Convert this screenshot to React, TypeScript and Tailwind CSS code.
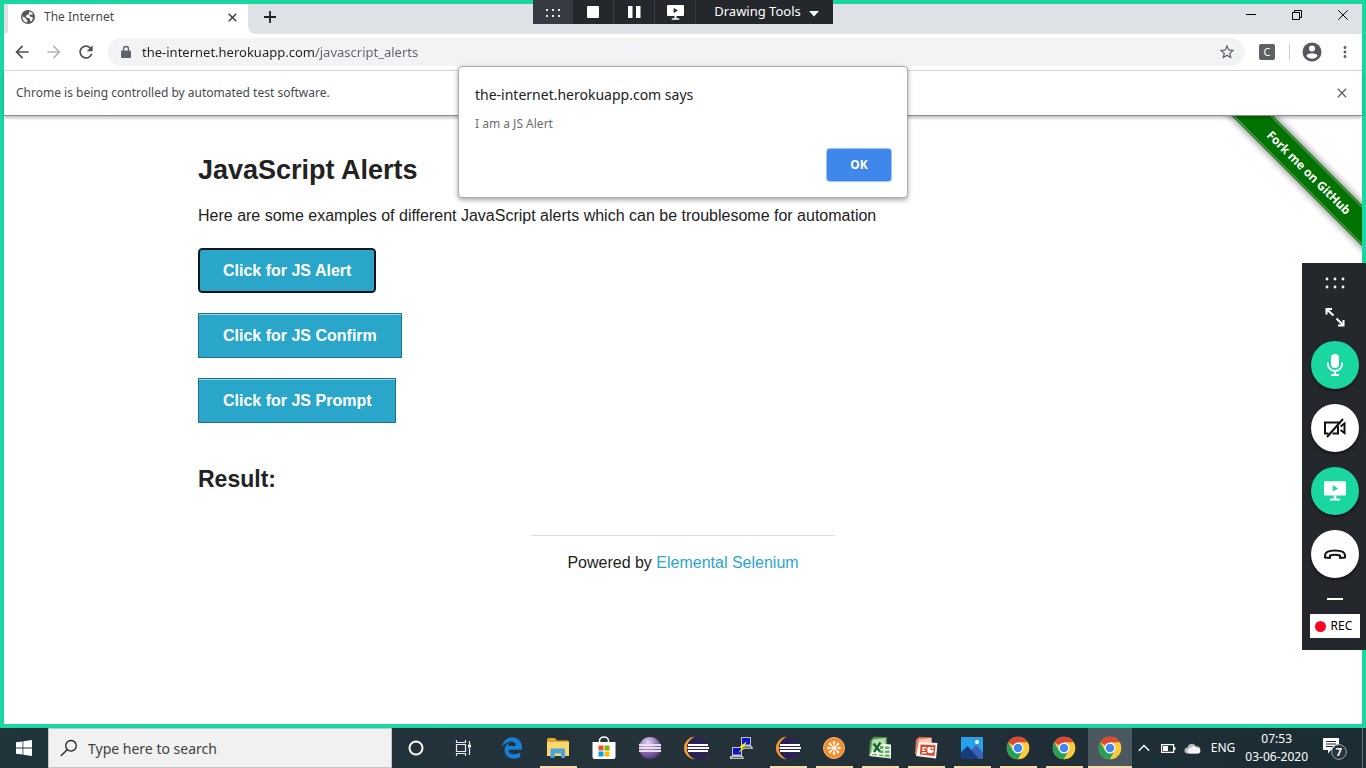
import type { ReactNode } from "react";
import { FaEdgeLegacy } from "react-icons/fa";
import {
  MdArrowBack,
  MdArrowForward,
  MdClose,
  MdLock,
  MdMoreVert,
  MdRefresh,
  MdStarBorder,
} from "react-icons/md";

const UI = "font-['Noto_Sans','Open_Sans',sans-serif]";

function DotsIcon() {
  return (
    <svg width="20" height="12" viewBox="0 0 20 12" fill="#fff">
      {[2, 10, 18].map((x) => (
        <g key={x}>
          <circle cx={x} cy="2" r="1.4" />
          <circle cx={x} cy="10" r="1.4" />
        </g>
      ))}
    </svg>
  );
}

function SmallDotsIcon() {
  return (
    <svg width="16" height="10" viewBox="0 0 16 10" fill="#e8e9ea">
      {[1, 7, 13].map((x) => (
        <g key={x}>
          <rect x={x} y="2" width="2" height="2" />
          <rect x={x} y="8" width="2" height="2" />
        </g>
      ))}
    </svg>
  );
}

function GlobeIcon() {
  return (
    <svg width="14" height="14" viewBox="0 0 14 14">
      <circle cx="7" cy="7" r="7" fill="#55595d" />
      <path d="M8 1.500c1.500 0 3 1 4 2.500l-1 .8-1.500-.3-1.200.8 1 1.500 1.800.1.800 1.300c-.3 1.500-1 2.500-2 3.300l-.8-.8.1-1.700-1.700-1-1.900-.2-.8-1.500 1.200-1.500 1.700-.4.6-1.200z" fill="#fff" />
      <path d="M1.400 6.200l2.500 1.200 1 1.700 1.300.8v2.700C3.500 12.300 1.300 10 1.400 6.200z" fill="#fff" />
    </svg>
  );
}

function ProfileIcon() {
  return (
    <svg width="20" height="20" viewBox="0 0 20 20">
      <circle cx="10" cy="10" r="9.500" fill="#54575b" />
      <circle cx="10" cy="6.500" r="3" fill="#fff" />
      <path d="M4.300 14C5 12 7.500 11.500 10 11.500s5 .5 5.700 2.500A6.800 6.800 0 0 1 10 16.800 6.800 6.800 0 0 1 4.300 14z" fill="#fff" />
    </svg>
  );
}

function ScreenIcon({ play = "#24272c", size = 17 }: { play?: string; size?: number }) {
  return (
    <svg width={size} height={size} viewBox="0 0 17 17">
      <path d="M1 1h15a1 1 0 0 1 1 1v9a1 1 0 0 1-1 1H1a1 1 0 0 1-1-1V2a1 1 0 0 1 1-1z" fill="#fff" />
      <path d="M7.500 12h2v2.200h-2zM5.500 14.200h6q1 0 1 1.600h-8q0-1.600 1-1.600z" fill="#fff" />
      <path d="M6.700 4.100l4.300 2.400-4.300 2.400z" fill={play} />
    </svg>
  );
}

function RecorderBar() {
  return (
    <div className={`absolute left-1/2 top-0 z-20 flex h-6 w-[300px] -translate-x-1/2 bg-[#24272c] text-white ${UI}`}>
      <button aria-label="Move toolbar" className="flex w-10 items-center justify-center bg-[#363a43]">
        <SmallDotsIcon />
      </button>
      <button aria-label="Stop" className="flex w-[41px] items-center justify-center border-r border-[#363a43]">
        <svg width="12" height="12" viewBox="0 0 12 12"><rect width="12" height="12" rx="1" fill="#fff" /></svg>
      </button>
      <button aria-label="Pause" className="flex w-[41px] items-center justify-center border-r border-[#363a43]">
        <svg width="13" height="12" viewBox="0 0 13 12"><path d="M0 0h4.500v12H0zM8 0h4.500v12H8z" fill="#fff" /></svg>
      </button>
      <button aria-label="Share screen" className="flex w-[41px] items-center justify-center border-r border-[#363a43]">
        <ScreenIcon />
      </button>
      <button className="flex flex-1 items-center justify-center gap-2 pl-1 text-[13px]">
        Drawing Tools
        <svg width="10" height="6" viewBox="0 0 10 6" className="mt-1"><path d="M0 0h10L5 5.600z" fill="#fff" /></svg>
      </button>
    </div>
  );
}

function TabStrip() {
  return (
    <div className="flex h-[30px] bg-white">
      <div className="w-1 rounded-br-[4px] bg-[#dee1e6]" />
      <div className="flex w-60 items-center bg-white pb-1 pl-[13px] pr-2">
        <GlobeIcon />
        <span className="flex-1 pl-[9px] text-[12px] leading-6 text-[#45494d]">The Internet</span>
        <button aria-label="Close tab" className="flex size-4 items-center justify-center">
          <svg width="9" height="9" viewBox="0 0 9 9"><path d="M.7.7l7.600 7.600M8.300.7L.7 8.300" stroke="#3c4043" strokeWidth="1.500" /></svg>
        </button>
      </div>
      <div className="flex flex-1 rounded-bl-lg bg-[#dee1e6]">
        <button aria-label="New tab" className="mr-auto flex h-full w-11 items-center justify-center pb-1">
          <svg width="12" height="12" viewBox="0 0 12 12"><path d="M6 0v12M0 6h12" stroke="#202124" strokeWidth="1.800" /></svg>
        </button>
        <div className="flex pb-2">
          <button aria-label="Minimize" className="flex w-[46px] items-center justify-center">
            <svg width="10" height="10" viewBox="0 0 10 10"><path d="M0 4.500h10" stroke="#000" /></svg>
          </button>
          <button aria-label="Restore" className="flex w-[46px] items-center justify-center">
            <svg width="10" height="10" viewBox="0 0 10 10" fill="none" stroke="#000"><path d="M.5 2.500h7v7h-7zM2.500 2.500V.5h7v7h-2" /></svg>
          </button>
          <button aria-label="Close window" className="flex w-[42px] items-center justify-center pl-1">
            <svg width="10" height="10" viewBox="0 0 10 10"><path d="M.3.3l9.400 9.400M9.700.3L.3 9.700" stroke="#000" /></svg>
          </button>
        </div>
      </div>
    </div>
  );
}

function Toolbar() {
  return (
    <div className="flex h-[37px] items-center border-b border-[#d5d7da] bg-white px-2 text-[#5f6368]">
      <button aria-label="Back" className="w-8"><MdArrowBack className="size-5 text-[#4b4f53]" /></button>
      <button aria-label="Forward" className="w-8"><MdArrowForward className="size-5 text-[#b5b7ba]" /></button>
      <button aria-label="Reload" className="w-8"><MdRefresh className="size-5 text-[#4b4f53]" /></button>
      <div className="flex h-7 flex-1 items-center rounded-full bg-[#f1f3f4] pl-[11px] pr-[9px]">
        <svg width="14" height="14" viewBox="0 0 14 14">
          <path d="M3 5.500h8q1 0 1 1V12q0 1-1 1H3q-1 0-1-1V6.500q0-1 1-1z" fill="#5f6368" />
          <path d="M4.500 6V4a2.500 2.500 0 0 1 5 0v2" fill="none" stroke="#5f6368" strokeWidth="1.300" />
        </svg>
        <input
          aria-label="Address"
          defaultValue="the-internet.herokuapp.com/javascript_alerts"
          className="ml-[9px] min-w-0 flex-1 bg-[linear-gradient(90deg,#202124_174px,#5f6368_174px)] bg-clip-text pt-0.5 text-[13px] text-transparent outline-none"
        />
        <button aria-label="Bookmark this page"><MdStarBorder className="size-[18px]" /></button>
      </div>
      <button aria-label="Extension" className="ml-3.5 flex size-4 items-center justify-center rounded-[2px] bg-[#5f6062] text-[11px] text-white">C</button>
      <div className="ml-3.5 h-4 w-px bg-[#c9cbce]" />
      <button aria-label="Profile" className="ml-3"><ProfileIcon /></button>
      <button aria-label="Menu" className="ml-[14px]"><MdMoreVert className="size-[18px]" /></button>
    </div>
  );
}

function InfoBar() {
  return (
    <div className="relative z-10 flex h-[45px] items-center border-b border-[#8c8c8c] bg-white px-3 shadow-[0_2px_3px_rgba(0,0,0,0.25)]">
      <p className="flex-1 text-[12px] text-[#45494d]">Chrome is being controlled by automated test software.</p>
      <button aria-label="Dismiss"><MdClose className="size-4 text-[#5f6368]" /></button>
    </div>
  );
}

function PageButton({ children, focused = false }: { children: ReactNode; focused?: boolean }) {
  return (
    <button
      className={`h-[45px] border bg-[#2ba6cb] px-6 text-[16px] font-bold text-white ${
        focused
          ? "rounded-[4px] border-[#0b171b] shadow-[inset_0_0_0_1px_#0b171b]"
          : "border-[#1e728c] shadow-[inset_0_1px_0_rgba(255,255,255,0.5)]"
      }`}
    >
      {children}
    </button>
  );
}

function WebPage() {
  return (
    <main className="relative flex-1 overflow-hidden bg-white font-['Liberation_Sans',Arial,sans-serif] text-[#222]">
      <a
        href="#fork"
        className={`absolute -right-[67px] top-[42px] flex h-[29px] w-60 rotate-45 items-center justify-center bg-[#007200] text-[12px] font-bold text-white shadow-[0_0_6px_2px_rgba(0,0,0,0.4)] outline outline-1 -outline-offset-2 outline-[#68ad68] ${UI}`}
      >
        Fork me on GitHub
      </a>
      <div className="mx-auto max-w-[1000px] px-[15px] pt-[35px]">
        <h3 className="text-[27px] font-bold leading-[38px]">JavaScript Alerts</h3>
        <p className="mt-[14px] text-[16px] leading-[26px]">
          Here are some examples of different JavaScript alerts which can be troublesome for automation
        </p>
        <ul className="mt-[19px] flex flex-col items-start gap-5">
          <li><PageButton focused>Click for JS Alert</PageButton></li>
          <li><PageButton>Click for JS Confirm</PageButton></li>
          <li><PageButton>Click for JS Prompt</PageButton></li>
        </ul>
        <h4 className="mt-10 text-[23px] font-bold leading-8">Result:</h4>
      </div>
      <footer className="mx-auto mt-10 w-[304px] border-t border-[#ddd] pt-[14px] text-center text-[16px] leading-[26px]">
        Powered by <a href="#selenium" className="text-[#2ba6cb]">Elemental Selenium</a>
      </footer>
    </main>
  );
}

function AlertDialog() {
  return (
    <div
      role="alertdialog"
      aria-labelledby="alert-title"
      className={`absolute left-1/2 top-[66px] z-20 flex w-[450px] -translate-x-1/2 flex-col rounded-[4px] border border-[#a9abad] bg-white px-4 pb-4 pt-4 shadow-[0_2px_5px_rgba(0,0,0,0.35)] ${UI}`}
    >
      <h2 id="alert-title" className="text-[14px] leading-6 text-[#202124]">the-internet.herokuapp.com says</h2>
      <p className="mt-2 text-[12px] leading-[18px] text-[#6b6e72]">I am a JS Alert</p>
      <button className="mt-4 h-8 w-16 self-end rounded-[3px] bg-[#3f87ea] text-[12px] font-bold text-white shadow-[0_0_0_1px_#9cc3f7]">
        OK
      </button>
    </div>
  );
}

function RoundButton({ label, green = false, children }: { label: string; green?: boolean; children: ReactNode }) {
  return (
    <button
      aria-label={label}
      className={`flex size-12 items-center justify-center rounded-full shadow-[0_2px_3px_rgba(0,0,0,0.5)] ${green ? "bg-[#1ad6a0]" : "bg-white"}`}
    >
      {children}
    </button>
  );
}

function CallPanel() {
  return (
    <aside className={`absolute right-0 top-[263px] z-20 flex h-[387px] w-16 flex-col items-center bg-[#24272c] pl-px pt-[14px] ${UI}`}>
      <button aria-label="Move panel"><DotsIcon /></button>
      <button aria-label="Expand" className="mb-3 mt-4 flex h-6 items-center">
        <svg width="20" height="20" viewBox="0 0 20 20" fill="none" stroke="#fff" strokeWidth="2">
          <path d="M1.500 7.500V2H7M2 2.500L8.500 8.500M13 18.500h5.500V13M11.500 11.500l6.500 6.500" />
        </svg>
      </button>
      <div className="flex flex-col gap-[15px]">
        <RoundButton label="Microphone" green>
          <svg width="18" height="24" viewBox="0 0 18 24">
            <rect x="5" y="1" width="8" height="14" rx="4" fill="#fff" />
            <path d="M1.800 9.500v1.500a7.200 7 0 0 0 14.400 0V9.500M9 18v3.500M5 22h8" fill="none" stroke="#fff" strokeWidth="1.800" />
          </svg>
        </RoundButton>
        <RoundButton label="Camera off">
          <svg width="24" height="22" viewBox="0 0 24 22" fill="none" stroke="#111" strokeWidth="2">
            <path d="M16 5.500H2v11h3.500M9.500 16.500H15V9M17.500 9.500l4-3v9.500l-4-3M4 20L20 2" />
          </svg>
        </RoundButton>
        <RoundButton label="Share screen" green><ScreenIcon play="#1ad6a0" size={22} /></RoundButton>
        <RoundButton label="Hang up">
          <svg width="24" height="14" viewBox="0 0 24 14" fill="none" stroke="#111" strokeWidth="2" strokeLinejoin="round">
            <path d="M2 10.500V8.500Q2 3.500 12 3.500t10 5v2l-5 .5v-2.500Q12 7 7 8.500V11z" />
          </svg>
        </RoundButton>
      </div>
      <button aria-label="Minimize panel" className="mt-5 h-0.5 w-4 bg-white" />
      <div className="mt-[14px] flex h-6 w-[50px] items-center gap-[5px] bg-white pl-[5px] text-[12px] text-black">
        <span className="size-[11px] rounded-full bg-[#fb0523]" />
        REC
      </div>
    </aside>
  );
}

function ChromeIcon() {
  return (
    <svg width="24" height="24" viewBox="0 0 24 24">
      <circle cx="12" cy="12" r="11.200" fill="#fbcb3c" />
      <path d="M12 12L2.300 6.400A11.200 11.200 0 0 1 21.700 6.400H12z" fill="#de4636" />
      <path d="M2.300 6.400A11.200 11.200 0 0 0 12 23.200L16.850 14.800 12 12 7.150 14.800z" fill="#24a05a" />
      <path d="M12 6.400h9.700A11.200 11.200 0 0 1 12 23.200l4.850-8.400z" fill="#fbcb3c" />
      <circle cx="12" cy="12" r="5.500" fill="#fff" />
      <circle cx="12" cy="12" r="4.300" fill="#4285f4" />
    </svg>
  );
}

function EclipseIcon({ old = false }: { old?: boolean }) {
  return (
    <svg width="26" height="24" viewBox="0 0 26 24">
      <defs>
        <radialGradient id="lilac" cx="0.4" cy="0.25" r="0.8">
          <stop offset="0" stopColor="#e4d6ee" />
          <stop offset="0.5" stopColor="#9275b3" />
          <stop offset="1" stopColor="#4b2f78" />
        </radialGradient>
      </defs>
      {old ? (
        <circle cx="13" cy="12" r="11" fill="url(#lilac)" />
      ) : (
        <>
          <path d="M11 .6a11.500 11.500 0 0 0 0 22.800A12.500 12.500 0 0 1 11 .6z" fill="#f39a2d" />
          <circle cx="14.500" cy="12" r="10.700" fill="#2c2255" />
          <path d="M12 .7C-2.500 3-2.500 21 12 23.300 1 18.500 1 5.500 12 .7z" fill="#f39a2d" />
        </>
      )}
      <path d={old ? "M2 9h22M2 12h22M2 15h22" : "M5 9h20M4.500 12H26M5 15h20"} stroke={old ? "#e8dff0" : "#fff"} strokeWidth="1.800" />
    </svg>
  );
}

function FolderIcon() {
  return (
    <svg width="24" height="22" viewBox="0 0 24 22">
      <path d="M1 2.500Q1 1 2.500 1H9l2 2.500h10.500Q23 3.500 23 5v14H1z" fill="#e5a42e" />
      <path d="M1 5h22v14H1z" fill="#fbd76c" />
      <path d="M4.500 21v-8.500q0-1 1-1h12.500q1 0 1 1V21h-4v-4.500H8.500V21z" fill="#4aa3dc" />
    </svg>
  );
}

function StoreIcon() {
  return (
    <svg width="24" height="24" viewBox="0 0 24 24">
      <path d="M7.500 6.500V5a4.500 4 0 0 1 9 0v1.500" fill="none" stroke="#fff" strokeWidth="1.500" />
      <path d="M.5 6h23v15q0 2-2 2h-19q-2 0-2-2z" fill="#fff" />
      <path d="M6.500 9.500h5v5h-5z" fill="#f25022" />
      <path d="M12.500 9.500h5v5h-5z" fill="#7fba00" />
      <path d="M6.500 15.500h5v5h-5z" fill="#00a4ef" />
      <path d="M12.500 15.500h5v5h-5z" fill="#ffb900" />
    </svg>
  );
}

function PuttyIcon() {
  return (
    <svg width="24" height="24" viewBox="0 0 24 24">
      <path d="M11 1h10v9H11zM11 11l11-1 1 3H10zM2 11h10v9H2zM0 20h13l1 3H0z" fill="#c4c6c3" />
      <path d="M12 2h8v6.500h-8zM3 12h8v6.500H3z" fill="#0a16c7" />
      <path d="M17 5l-8 6.500 3 .5-4 5 9-6-3-.5z" fill="#f8ee20" />
      <path d="M2 21.500h10M12 11.800h9" stroke="#585c5c" />
    </svg>
  );
}

function FlowerIcon() {
  return (
    <svg width="24" height="24" viewBox="0 0 24 24">
      <circle cx="12" cy="12" r="10.500" fill="#f68b28" stroke="#f9b779" />
      <g stroke="#fff" strokeLinecap="round">
        {[0, 45, 90, 135, 180, 225, 270, 315].map((a) => (
          <g key={a} transform={`rotate(${a} 12 12)`}>
            <path d="M12 10V7" strokeWidth="1" />
            <path d="M12 6.800V6.300" strokeWidth="2.600" />
          </g>
        ))}
      </g>
      <circle cx="12" cy="12" r="1.800" fill="#fff" />
    </svg>
  );
}

function ExcelIcon() {
  return (
    <svg width="24" height="24" viewBox="0 0 24 24">
      <path d="M2 5L6 .8l13 .5v14L1 19z" fill="#4d9a48" />
      <path d="M4.500 3.500l13-1.500v16l-15 .5z" fill="#b9dcae" />
      <path d="M10 7.500l13 1v14L1 20z" fill="#f4faf2" />
      <path d="M12 10h3.500v3H12zM17 10.500h4.500V13H17zM11.500 14.500h4V17h-4zM17 14.500h4.500V17H17zM4 18h5v1.500l-5-.5zM11 18.500h4.500v2L11 20zM17 18.500h4.500v2.700l-4.500-.5z" fill="#60b257" />
      <path d="M5.500 7.500L12 15.500M12.500 6.500L6 16" stroke="#17652b" strokeWidth="2.400" />
    </svg>
  );
}

function PowerPointIcon() {
  return (
    <svg width="24" height="24" viewBox="0 0 24 24">
      <path d="M2 4L5 1l13 .5V17L1 18z" fill="#e9795b" />
      <path d="M5 3.500L17 2v15L3 18z" fill="#f9c7b4" />
      <path d="M5 6l18.500 1L22 22.500 2 20z" fill="#fff4ef" />
      <path d="M6.500 8.500l15 .8-1 10.700-14.500-1.500z" fill="#d8472a" />
      <path d="M8 11h4.500v1.500H8zM8 13.500h3v1.500H8zM8 16h4.500v1.500H8z" fill="#fff" />
      <circle cx="16.500" cy="14" r="3.300" fill="#fff" />
      <path d="M16.500 14V10h4v4z" fill="#d8472a" />
      <path d="M17.500 13v-2.200a2.400 2.400 0 0 1 2.300 2.200z" fill="#fff" />
    </svg>
  );
}

function PhotosIcon() {
  return (
    <svg width="22" height="22" viewBox="0 0 22 22">
      <rect width="22" height="22" fill="#26a0e8" />
      <path d="M11 22l-4-6 8.500-8L22 16v6z" fill="#3a62b8" />
      <path d="M0 15.500L6.500 9 18 22H0z" fill="#173c7d" />
      <circle cx="16" cy="5" r="2" fill="#fff" />
    </svg>
  );
}

const APPS: { name: string; icon: ReactNode; open?: boolean; active?: boolean }[] = [
  { name: "Edge", icon: <FaEdgeLegacy className="size-[22px] text-[#1580d5]" /> },
  { name: "File Explorer", icon: <FolderIcon />, open: true },
  { name: "Store", icon: <StoreIcon /> },
  { name: "Eclipse Classic", icon: <EclipseIcon old /> },
  { name: "Eclipse", icon: <EclipseIcon /> },
  { name: "PuTTY", icon: <PuttyIcon /> },
  { name: "Eclipse Workspace", icon: <EclipseIcon />, open: true },
  { name: "Meeting", icon: <FlowerIcon />, open: true },
  { name: "Excel", icon: <ExcelIcon />, open: true },
  { name: "PowerPoint", icon: <PowerPointIcon />, open: true },
  { name: "Photos", icon: <PhotosIcon />, open: true },
  { name: "Chrome", icon: <ChromeIcon />, open: true },
  { name: "Chrome window 2", icon: <ChromeIcon />, open: true },
  { name: "Chrome window 3", icon: <ChromeIcon />, open: true, active: true },
];

function Taskbar() {
  return (
    <nav className={`flex h-10 bg-linear-to-r from-[#20343c] via-[#25323a] to-[#1b2c34] text-white ${UI}`}>
      <button aria-label="Start" className="flex w-12 items-center justify-center">
        <svg width="16" height="16" viewBox="0 0 16 16" fill="#fff">
          <path d="M0 2.300l6.500-.9v6.200H0zM7.300 1.300L16 0v7.600H7.300zM0 8.400h6.500v6.200L0 13.700zM7.300 8.400H16V16l-8.700-1.300z" />
        </svg>
      </button>
      <label className="flex w-[344px] items-center border border-[#c2c6c8] bg-[#f1f1f1] pl-[11px]">
        <svg width="18" height="18" viewBox="0 0 18 18" fill="none" stroke="#222" strokeWidth="1.300">
          <circle cx="11" cy="6.800" r="5.300" />
          <path d="M7.200 10.700L.8 17" />
        </svg>
        <input
          aria-label="Search"
          placeholder="Type here to search"
          className="ml-2.5 min-w-0 flex-1 bg-transparent text-[14px] outline-none placeholder:text-[#404040]"
        />
      </label>
      <button aria-label="Cortana" className="ml-px flex w-[46px] items-center justify-center">
        <svg width="16" height="16" viewBox="0 0 16 16"><circle cx="8" cy="8" r="6.500" fill="none" stroke="#fff" strokeWidth="2" /></svg>
      </button>
      <button aria-label="Task view" className="mr-0.5 flex w-12 items-center justify-center">
        <svg width="17" height="16" viewBox="0 0 17 16" fill="none" stroke="#e8ecee" strokeWidth="1.200">
          <path d="M1.500 4.500h9v7h-9zM1.500 0v2.500h9V0M1.500 16v-2.500h9V16M14.500 1v3M14.500 8v7" />
          <path d="M13 4.500h3v3h-3z" fill="#fff" stroke="none" />
        </svg>
      </button>
      {APPS.map((app) => (
        <button key={app.name} aria-label={app.name} className="flex w-[46px] flex-col items-center">
          <span className={`flex h-[38px] w-11 items-center justify-center pt-0.5 ${app.active ? "bg-[#4b585f]" : ""}`}>{app.icon}</span>
          <span className={`h-0.5 ${app.active ? "w-11" : "w-[37px]"} ${app.open ? "bg-[#fbd9ae]" : ""}`} />
        </button>
      ))}
      <div className="flex flex-1 items-center justify-end">
        <button aria-label="Show hidden icons" className="mr-[11px]">
          <svg width="12" height="8" viewBox="0 0 12 8"><path d="M.8 6.800L6 1.500l5.200 5.300" fill="none" stroke="#fff" strokeWidth="1.300" /></svg>
        </button>
        <svg width="15" height="9" viewBox="0 0 15 9" className="mr-2">
          <path d="M.6.6h12v7.800h-12zM13.800 3v3" fill="none" stroke="#fff" strokeWidth="1.200" />
          <path d="M2 2h5v5H2z" fill="#fff" />
        </svg>
        <svg width="17" height="11" viewBox="0 0 17 11" className="mr-2.5">
          <path d="M3.500 10.500a3 3 0 0 1 0-6A4.500 4.500 0 0 1 12 3.500a3.500 3.500 0 0 1 1.500 7z" fill="#b9bdc0" />
          <path d="M6 10.500a2.600 2.600 0 0 1 .5-5.200 3.600 3.600 0 0 1 6.300-.3 2.800 2.800 0 0 1 1.200 5.500z" fill="#f4f5f5" />
        </svg>
        <span className="text-[12px]">ENG</span>
        <time className="ml-2.5 text-center text-[12px] leading-[18px]">
          07:53
          <br />
          03-06-2020
        </time>
        <button aria-label="Notifications, 7 new" className="relative ml-[15px] mr-[15px] h-6 w-6">
          <svg width="24" height="24" viewBox="0 0 24 24">
            <path d="M0 2h16v12H8l-3 3.500V14H0z" fill="#fff" />
            <path d="M3 5.500h10M3 8h10M3 10.500h7" stroke="#1b2c34" />
            <circle cx="16" cy="16" r="7.400" fill="#26353c" stroke="#9ca4a8" />
          </svg>
          <span className="absolute bottom-0 right-0 size-4 text-center text-[11px] font-bold leading-4">7</span>
        </button>
        <div className="h-full w-1 border-l border-[#647279]" />
      </div>
    </nav>
  );
}

export default function App() {
  return (
    <div className="relative flex min-h-screen flex-col">
      <div className="flex flex-1 flex-col border-4 border-[#1ad6a0]">
        <header className={UI}>
          <TabStrip />
          <Toolbar />
          <InfoBar />
        </header>
        <WebPage />
      </div>
      <Taskbar />
      <RecorderBar />
      <AlertDialog />
      <CallPanel />
    </div>
  );
}
